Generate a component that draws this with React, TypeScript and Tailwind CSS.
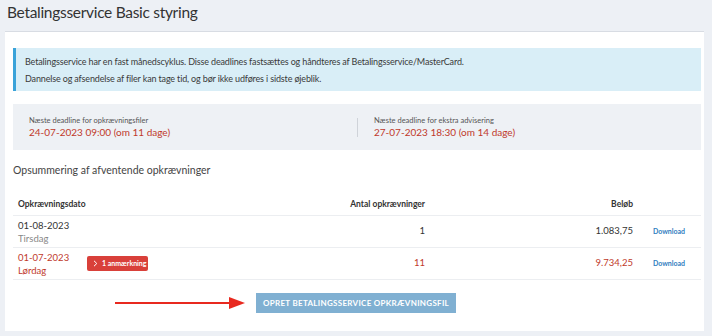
import React from 'react';

const font = { fontFamily: '"Source Sans Pro", Lato, "Noto Sans", sans-serif' };

function Arrow() {
  return (
    <svg width="130" height="14" viewBox="0 0 130 14" className="block">
      <line x1="0" y1="7" x2="116" y2="7" stroke="#e8291f" strokeWidth="2" />
      <polygon points="114,1 130,7 114,13" fill="#e8291f" />
    </svg>
  );
}

type Row = {
  date: string;
  day: string;
  count: string;
  amount: string;
  warn?: boolean;
};

const rows: Row[] = [
  { date: '01-08-2023', day: 'Tirsdag', count: '1', amount: '1.083,75' },
  { date: '01-07-2023', day: 'Lørdag', count: '11', amount: '9.734,25', warn: true },
];

export default function App() {
  return (
    <div className="w-[712px] h-[336px] bg-[#edf0f5] overflow-hidden text-[#333]" style={font}>
      <h1 className="text-[15.5px] tracking-[-0.3px] leading-none pl-[7px] pt-[5px] h-[31px] text-[#333]">
        Betalingsservice Basic styring
      </h1>
      <div className="ml-[5px] mr-[8px] bg-white border-t border-[#d8dce3] h-[300px] pl-[8px] pr-[3px] pt-[16px]">
        <div className="bg-[#d9eef7] border-l-[3px] border-[#3aa3d9] px-[9px] pt-[5px] pb-[4px] text-[9px] tracking-[-0.15px] leading-[17px] text-[#3a3a3a]">
          <div>Betalingsservice har en fast månedscyklus. Disse deadlines fastsættes og håndteres af Betalingsservice/MasterCard.</div>
          <div>Dannelse og afsendelse af filer kan tage tid, og bør ikke udføres i sidste øjeblik.</div>
        </div>

        <div className="mt-[13px] bg-[#eef1f5] h-[46px] flex items-center">
          <div className="w-[344px] pl-[16px]">
            <div className="text-[7.5px] leading-[10px] text-[#555]">Næste deadline for opkrævningsfiler</div>
            <div className="text-[10px] leading-[12px] text-[#c0392b]">24-07-2023 09:00 (om 11 dage)</div>
          </div>
          <div className="w-px h-[19px] bg-[#cfd3d9]" />
          <div className="pl-[16px]">
            <div className="text-[7.5px] leading-[10px] text-[#555]">Næste deadline for ekstra advisering</div>
            <div className="text-[10px] leading-[12px] text-[#c0392b]">27-07-2023 18:30 (om 14 dage)</div>
          </div>
        </div>

        <div className="mt-[13px] text-[10.5px] leading-[14px] text-[#444]">Opsummering af afventende opkrævninger</div>

        <div className="mt-[17px]">
          <div className="flex items-center h-[22px] border-b border-[#eceef1] text-[8.5px] font-bold text-[#333]">
            <div className="w-[200px] pl-[5px]">Opkrævningsdato</div>
            <div className="w-[212px] text-right">Antal opkrævninger</div>
            <div className="w-[208px] text-right">Beløb</div>
            <div className="flex-1" />
          </div>
          {rows.map((r) => (
            <div key={r.date} className="flex items-center h-[32px] border-b border-[#eceef1] text-[9.5px]">
              <div className="w-[200px] pl-[5px] flex items-center">
                <div className={`w-[69px] leading-[13px] ${r.warn ? 'text-[#c0392b]' : ''}`}>
                  <div>{r.date}</div>
                  <div className={r.warn ? '' : 'text-[#888]'}>{r.day}</div>
                </div>
                {r.warn && (
                  <div className="bg-[#d9403a] text-white rounded-[2px] h-[15px] w-[61px] flex items-center pl-[6px] gap-[4px] text-[7px] font-bold">
                    <svg width="5" height="7" viewBox="0 0 5 7">
                      <polyline points="1,0.8 3.8,3.5 1,6.2" fill="none" stroke="white" strokeWidth="1" />
                    </svg>
                    <span>1 anmærkning</span>
                  </div>
                )}
              </div>
              <div className={`w-[212px] text-right ${r.warn ? 'text-[#c0392b]' : ''}`}>{r.count}</div>
              <div className={`w-[208px] text-right ${r.warn ? 'text-[#c0392b]' : ''}`}>{r.amount}</div>
              <div className="pl-[20px] text-[7px] font-bold text-[#2f7dc0]">Download</div>
            </div>
          ))}
        </div>

        <div className="mt-[13px] flex items-center">
          <div className="ml-[102px]">
            <Arrow />
          </div>
          <button className="ml-[11px] h-[20px] px-[7px] bg-[#80b0d2] text-white text-[8px] font-bold tracking-[0.3px]">
            OPRET BETALINGSSERVICE OPKRÆVNINGSFIL
          </button>
        </div>
      </div>
    </div>
  );
}
